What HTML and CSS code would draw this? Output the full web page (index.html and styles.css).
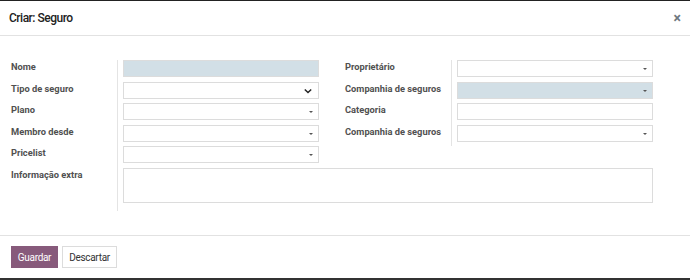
FILE: index.html
```html
<!DOCTYPE html>
<html lang="pt">
<head>
<meta charset="utf-8">
<link rel="stylesheet" href="styles.css">
</head>
<body>
<div class="modal">
  <header class="modal-header">
    <h4 class="modal-title">Criar: Seguro</h4>
    <span class="close">×</span>
  </header>
  <main class="modal-body">
    <div class="form-grid">
      <label class="lbl">Nome</label>
      <div class="cell sep"><div class="input required"></div></div>
      <div class="gap"></div>
      <label class="lbl">Proprietário</label>
      <div class="cell sep"><div class="input m2o"><span class="caret"></span></div></div>

      <label class="lbl">Tipo de seguro</label>
      <div class="cell sep"><div class="input sel"><svg class="chev" viewBox="0 0 10 6" width="8" height="6"><path d="M1 1 L5 5 L9 1" fill="none" stroke="#222" stroke-width="1.8"/></svg></div></div>
      <div class="gap"></div>
      <label class="lbl">Companhia de seguros</label>
      <div class="cell sep"><div class="input m2o required"><span class="caret"></span></div></div>

      <label class="lbl">Plano</label>
      <div class="cell sep"><div class="input m2o"><span class="caret"></span></div></div>
      <div class="gap"></div>
      <label class="lbl">Categoria</label>
      <div class="cell sep"><div class="input"></div></div>

      <label class="lbl">Membro desde</label>
      <div class="cell sep"><div class="input m2o"><span class="caret"></span></div></div>
      <div class="gap"></div>
      <label class="lbl">Companhia de seguros</label>
      <div class="cell sep"><div class="input m2o"><span class="caret"></span></div></div>

      <label class="lbl">Pricelist</label>
      <div class="cell sep"><div class="input m2o"><span class="caret"></span></div></div>
      <div class="gap"></div>
      <div class="empty"></div>
      <div class="empty"></div>

      <label class="lbl">Informação extra</label>
      <div class="cell sep wide last"><div class="textarea"></div></div>
    </div>
  </main>
  <footer class="modal-footer">
    <button class="btn btn-primary">Guardar</button>
    <button class="btn btn-secondary">Descartar</button>
  </footer>
</div>
</body>
</html>
```

FILE: styles.css
```css
* { box-sizing: border-box; }
html, body { margin: 0; padding: 0; background: #fff; }
body { font-family: Roboto, "Noto Sans", sans-serif; color: #4c4c4c; }

.modal {
  width: 690px;
  height: 280px;
  display: flex;
  flex-direction: column;
  border-top: 1px solid #222;
  border-bottom: 2px solid #333;
}

.modal-header {
  height: 35px;
  display: flex;
  align-items: center;
  justify-content: space-between;
  padding: 0 9px;
  border-bottom: 1px solid #e2e2e2;
}
.modal-title {
  margin: 0;
  font-size: 12px;
  font-weight: 500;
  color: #222;
  letter-spacing: -0.5px;
}
.close {
  font-size: 14px;
  font-weight: 700;
  color: #6f7880;
  line-height: 1;
}

.modal-body {
  flex: 1;
  padding: 24px 11px 0 11px;
}

.form-grid {
  display: grid;
  grid-template-columns: 106px 202px 26px 106px 202px;
  grid-template-rows: repeat(5, 21.5px) auto;
}
.lbl {
  font-size: 9.3px;
  font-weight: 700;
  color: #505050;
  line-height: 14px;
  white-space: nowrap;
}
.cell { padding: 0 0 4.5px 5px; }
.sep { border-left: 1px solid #e4e4e4; }
.wide { grid-column: 2 / 6; }
.last { padding-bottom: 8px; }

.input {
  position: relative;
  width: 196px;
  height: 17px;
  border: 1px solid #dcdcdc;
  background: #fff;
}
.input.required { background: #d2dfe6; }
.caret {
  position: absolute;
  right: 5px;
  top: 7px;
  width: 0;
  height: 0;
  border-left: 2px solid transparent;
  border-right: 2px solid transparent;
  border-top: 2px solid #555;
}
.sel .chev {
  position: absolute;
  right: 6px;
  top: 5px;
}
.textarea {
  height: 35px;
  border: 1px solid #dcdcdc;
  width: 530px;
}

.modal-footer {
  height: 43px;
  border-top: 1px solid #e2e2e2;
  display: flex;
  align-items: center;
  gap: 4px;
  padding: 0 11px;
}
.btn {
  height: 22px;
  font-family: Roboto, "Noto Sans", sans-serif;
  font-size: 10px;
  padding: 0;
  border-radius: 0;
  letter-spacing: -0.3px;
  text-align: center;
}
.btn-primary {
  width: 47px;
  background: #875a7b;
  border: 1px solid #875a7b;
  color: #fff;
}
.btn-secondary {
  width: 55px;
  background: #fff;
  border: 1px solid #dcdcdc;
  color: #333;
}
```
